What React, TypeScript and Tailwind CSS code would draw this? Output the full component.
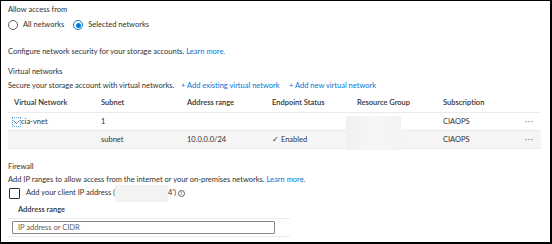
import React from 'react';

const font = { fontFamily: 'Lato, "Noto Sans", sans-serif' };

function Radio({ on, label }: { on?: boolean; label: string }) {
  return (
    <div className="flex items-center gap-[5px]">
      <span className={`w-[10px] h-[10px] rounded-full border flex items-center justify-center ${on ? 'border-[#0078d4]' : 'border-[#605e5c]'}`}>
        {on && <span className="w-[5px] h-[5px] rounded-full bg-[#0078d4]" />}
      </span>
      <span>{label}</span>
    </div>
  );
}

const cols = 'grid grid-cols-[87px_86px_85px_85px_86px_1fr_30px] items-center [&>span]:pl-[6px]';

export default function App() {
  return (
    <div style={font} className="w-[552px] h-[244px] bg-white border-l border-t border-r-2 border-b-2 border-black text-[#323130] text-[7.5px] leading-[12px] whitespace-nowrap overflow-hidden">
      <div className="pl-[7px] pr-[9px] pt-[3px]">
        <div className="h-[12px]">Allow access from</div>
        <div className="h-[12px] mt-[3px] flex items-center gap-[9px]">
          <Radio label="All networks" />
          <Radio on label="Selected networks" />
        </div>
        <div className="h-[12px] mt-[15px]">
          Configure network security for your storage accounts. <span className="text-[#0078d4]">Learn more.</span>
        </div>
        <div className="h-[12px] mt-[8px]">Virtual networks</div>
        <div className="h-[12px] mt-[2px] flex">
          <span className="w-[173px]">Secure your storage account with virtual networks.</span>
          <span className="text-[#0078d4] w-[108px]">+ Add existing virtual network</span>
          <span className="text-[#0078d4]">+ Add new virtual network</span>
        </div>

        <div className="relative mt-[2px]">
          <div className={`${cols} h-[19px] border-b border-[#edebe9] font-semibold`}>
            <span>Virtual Network</span>
            <span>Subnet</span>
            <span>Address range</span>
            <span>Endpoint Status</span>
            <span>Resource Group</span>
            <span>Subscription</span>
            <span />
          </div>
          <div className={`${cols} h-[18px] border-b border-[#edebe9]`}>
            <span className="!pl-[4px] flex items-center">
              <span className="w-[9px] h-[10px] border border-dotted border-[#4aa3e8] flex items-center justify-center">
                <svg width="7" height="4" viewBox="0 0 7 4" fill="none" stroke="#605e5c" strokeWidth="0.8"><path d="M0.5 0.5 L3.5 3.5 L6.5 0.5" /></svg>
              </span>
              <span>cia-vnet</span>
            </span>
            <span>1</span>
            <span />
            <span />
            <span />
            <span>CIAOPS</span>
            <span className="!pl-[14px] tracking-[1px] text-[#605e5c]">···</span>
          </div>
          <div className={`${cols} h-[18px] border-b border-[#edebe9] bg-[#f5f5f5]`}>
            <span />
            <span>subnet</span>
            <span>10.0.0.0/24</span>
            <span>✓ Enabled</span>
            <span />
            <span>CIAOPS</span>
            <span className="!pl-[14px] tracking-[1px] text-[#605e5c]">···</span>
          </div>
          <div className="absolute left-[338px] top-[22px] w-[55px] h-[34px] bg-gradient-to-r from-[#f0f0f0] via-[#f7f7f7] to-[#f3f3f3]" />
        </div>

        <div className="h-[12px] mt-[12px]">Firewall</div>
        <div className="h-[12px] mt-[1px]">
          Add IP ranges to allow access from the internet or your on-premises networks. <span className="text-[#0078d4]">Learn more.</span>
        </div>
        <div className="relative h-[12px] mt-[1px] flex items-center">
          <span className="w-[11px] h-[11px] border border-[#323130] rounded-[1px] ml-[1px]" />
          <span className="ml-[6px]">Add your client IP address (</span>
          <span className="w-[53px] h-[17px] bg-[#f3f3f3]" />
          <span>4')</span>
          <span className="ml-[2px] w-[7px] h-[7px] rounded-full border border-[#605e5c] text-[5px] leading-[5px] flex items-center justify-center">i</span>
        </div>

        <div className="w-[282px] mt-[3px]">
          <div className="h-[17px] pl-[10px] font-semibold flex items-center border-b border-[#edebe9]">Address range</div>
          <div className="h-[18px] flex items-center border-b border-[#edebe9] pl-[4px]">
            <div className="w-[263px] h-[13px] border border-[#8a8886] rounded-[1px] flex items-center pl-[5px] text-[#605e5c]">IP address or CIDR</div>
          </div>
        </div>
      </div>
    </div>
  );
}
